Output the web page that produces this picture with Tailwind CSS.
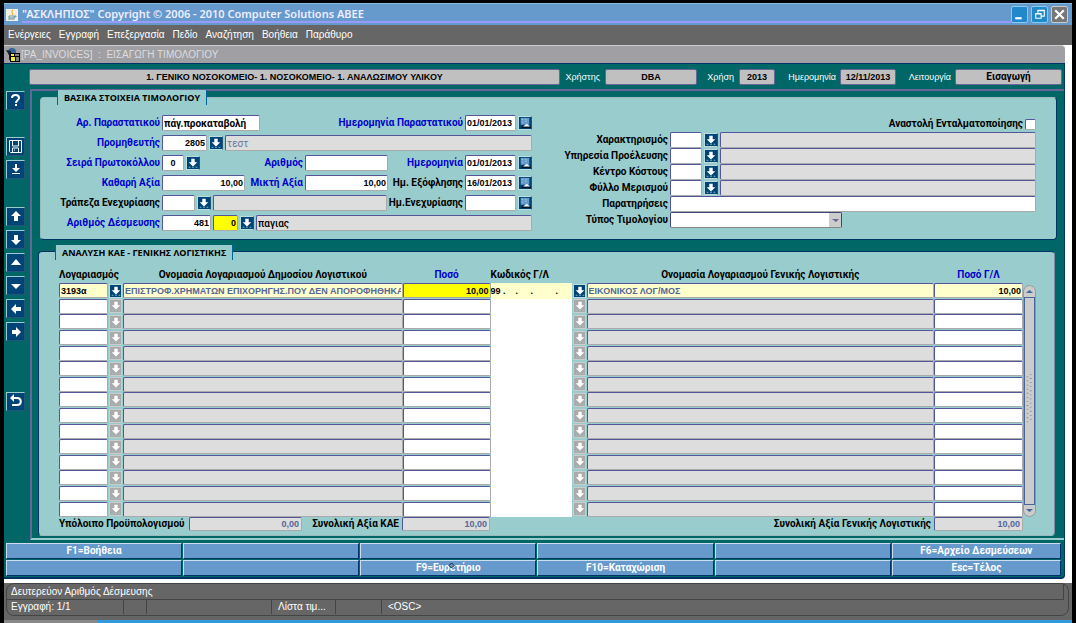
<!DOCTYPE html>
<html lang="el">

<head>
  <title>ΑΣΚΛΗΠΙΟΣ</title>
  <meta charset="UTF-8">
  <meta name="viewport" content="width=device-width, initial-scale=1.0">
  <script src="https://cdn.jsdelivr.net/npm/@tailwindcss/browser@4"></script>
</head>

<body class="bg-black pt-[3px] pl-1 pr-1 text-[10px] leading-3 font-['Liberation_Sans',sans-serif]">
  <!-- icons -->
  <svg class="hidden">
    <symbol id="lov" viewBox="0 0 14 14">
      <path d="M5 2h4v4h3l-5 5-5-5h3z" fill="#fff" />
      <path d="M2 12h2M6 12h2M10 12h2" stroke="#9cc" />
    </symbol>
    <symbol id="cal" viewBox="0 0 14 14">
      <path d="M2 1h10v8H2z" fill="#69c" />
      <path d="M3 3h2M7 3h2M3 6h2M7 5h2" stroke="#9cc" />
      <path d="M3 12h11" stroke="#012" stroke-width="2" />
      <path d="M5 11l4-3 4 3z" fill="#fff" />
    </symbol>
  </svg>

  <header class="flex items-center h-[22px] bg-[#69c] border-t border-[#8bd] pl-[2px] pr-1 text-[#eef]">
    <svg class="w-3 h-3 mr-1" viewBox="0 0 12 12">
      <rect width="12" height="12" fill="#f4f0e0" />
      <path d="M7 1c-3 2 1 3-1 5" stroke="#e90" fill="none" />
      <path d="M3 7h5v2H3zM2 10h7M8 7h2v1H8" stroke="#69a" fill="none" />
    </svg>
    <h1 class="flex-1 border-b-2 border-[#99f] h-[17px] leading-4 text-[11px] font-semibold font-['Noto_Sans',sans-serif]">"ΑΣΚΛΗΠΙΟΣ" Copyright © 2006 - 2010 Computer Solutions ABEE</h1>
    <div class="flex gap-[3px]">
      <button class="size-[17px] rounded-xs border border-[#8ce] bg-[#28c]" aria-label="Minimize">
        <svg viewBox="0 0 14 14"><path d="M3 10.500h6" stroke="#fff" stroke-width="2" /></svg>
      </button>
      <button class="size-[17px] rounded-xs border border-[#8ce] bg-[#28c]" aria-label="Restore">
        <svg viewBox="0 0 14 14"><path d="M5.500 6V3.500h6v5H9M3.500 6.500h5v4h-5zM5 3h7M3 6h6" stroke="#fff" fill="none" /></svg>
      </button>
      <button class="size-[17px] rounded-xs border border-[#ccc] bg-[#777]" aria-label="Close">
        <svg viewBox="0 0 14 14"><path d="M3 3l8 8M11 3l-8 8" stroke="#fff" stroke-width="2" /></svg>
      </button>
    </div>
  </header>

  <nav class="flex items-center gap-2 h-5 bg-[#666] px-1 text-white">
    <a href="#">Ενέργειες</a>
    <a href="#">Εγγραφή</a>
    <a href="#">Επεξεργασία</a>
    <a href="#">Πεδίο</a>
    <a href="#">Αναζήτηση</a>
    <a href="#">Βοήθεια</a>
    <a href="#">Παράθυρο</a>
  </nav>

  <main class="bg-white pr-[7px] pb-1">
    <div class="flex items-center h-[18px] rounded-tr-sm bg-[#a09fa4] border-t border-[#ccc] pl-[2px] text-[#ddd]">
      <svg class="w-[14px] h-[14px] mr-px" viewBox="0 0 14 14">
        <circle cx="6" cy="4" r="4" fill="#369" />
        <path d="M0 2l3 5v5h2V3z" fill="#123" />
        <path d="M4 5h10v9H4z" fill="#000" />
        <path d="M5 6h3v2H5zM5 9h4v4H5z" fill="#ee3" />
        <path d="M9 7h4M10 10h3M10 12h3" stroke="#fff" />
      </svg>
      <h2 class="whitespace-pre">[PA_INVOICES]  :  ΕΙΣΑΓΩΓΗ ΤΙΜΟΛΟΓΙΟΥ</h2>
    </div>

    <div class="bg-[#066] border-t border-r border-b-2 border-[#036] rounded-br-sm">
      <!-- session info -->
      <div class="flex items-center h-[25px] pl-[25px] pr-[2px] text-white text-[9px] [&>output]:h-4 [&>output]:rounded-xs [&>output]:bg-[#c0c0c0] [&>output]:border [&>output]:border-[#669] [&>output]:text-black [&>output]:leading-[14px] [&>output]:text-center [&>output]:font-bold">
        <output class="flex-1">1. ΓΕΝΙΚΟ ΝΟΣΟΚΟΜΕΙΟ- 1. ΝΟΣΟΚΟΜΕΙΟ- 1. ΑΝΑΛΩΣΙΜΟΥ ΥΛΙΚΟΥ</output>
        <span class="w-[45px] text-right pr-[5px]">Χρήστης</span>
        <output class="w-[92px]">DBA</output>
        <span class="w-[42px] text-right pr-[5px]">Χρήση</span>
        <output class="w-9">2013</output>
        <span class="w-[65px] text-right pr-1">Ημερομηνία</span>
        <output class="w-14">12/11/2013</output>
        <span class="w-[59px] text-right pr-1">Λειτουργία</span>
        <output class="w-[107px] text-[10px] font-['Roboto',sans-serif]">Εισαγωγή</output>
      </div>

      <div class="flex">
        <aside class="flex flex-col gap-1 w-[26px] pt-[2px] pl-[2px] [&>button]:w-[19px] [&>button]:h-[19px] [&>button]:bg-[#047] [&>button]:border [&>button]:border-[#9cc] [&>button]:border-r-[#257] [&>button]:border-b-[#257]">
          <button aria-label="Βοήθεια"><svg viewBox="0 0 17 17"><path d="M5 6c0-4 7-4 7 0 0 2-3 2-3 5M9 12v2" stroke="#fff" stroke-width="2" fill="none" /></svg></button>
          <button class="mt-[23px]" aria-label="Αποθήκευση"><svg viewBox="0 0 17 17"><path d="M2.500 2.500h12v12h-11l-1-1zM5.500 3v5h6V3M5.500 14v-4h6v4M7 12h1" stroke="#fff" fill="none" /></svg></button>
          <button aria-label="Εισαγωγή"><svg viewBox="0 0 17 17"><path d="M8 3h2v4h3l-4 4-4-4h3zM5 12h8v1H5z" fill="#fff" /></svg></button>
          <button class="mt-[24px]" aria-label="Πρώτη"><svg viewBox="0 0 17 17"><path d="M9 3l5 5h-3v5H7V8H4z" fill="#fff" /></svg></button>
          <button aria-label="Τελευταία"><svg viewBox="0 0 17 17"><path d="M9 14l5-5h-3V4H7v5H4z" fill="#fff" /></svg></button>
          <button aria-label="Πάνω"><svg viewBox="0 0 17 17"><path d="M9 5l5 6H4z" fill="#fff" /></svg></button>
          <button aria-label="Κάτω"><svg viewBox="0 0 17 17"><path d="M9 12l5-5H4z" fill="#fff" /></svg></button>
          <button aria-label="Προηγούμενο"><svg viewBox="0 0 17 17"><path d="M4 9l5-5v3h5v4H9v3z" fill="#fff" /></svg></button>
          <button aria-label="Επόμενο"><svg viewBox="0 0 17 17"><path d="M14 9L9 4v3H5v4h4v3z" fill="#fff" /></svg></button>
          <button class="mt-[47px]" aria-label="Έξοδος"><svg viewBox="0 0 17 17"><path d="M4 5h6c5 0 5 7 0 7H5" stroke="#fff" stroke-width="2" fill="none" /><path d="M3 5l4-4v8z" fill="#fff" /></svg></button>
        </aside>

        <div class="flex-1 border-2 border-r-0 border-[#669] border-b-[#9cc] pr-[7px] pb-[2px] font-bold font-['Roboto',sans-serif]">
          <!-- basic data -->
          <section class="mt-[6px] ml-2 h-[143px] rounded-sm bg-[#9cc] border border-[#9bb] border-r-[#036] border-b-[#036] pl-4 pr-5">
            <h3 class="w-fit -mt-2 h-[15px] px-[6px] leading-4 bg-[#9cc] border-x border-[#069] text-[9px] font-['Open_Sans',sans-serif]">ΒΑΣΙΚΑ ΣΤΟΙΧΕΙΑ ΤΙΜΟΛΟΓΙΟΥ</h3>
            <form class="flex items-start [&_label]:text-right [&_label]:whitespace-nowrap [&_input]:h-4 [&_input]:px-px [&_input]:rounded-xs [&_input]:border [&_input]:border-[#559] [&_input]:border-r-[#aaa] [&_input]:border-b-[#aaa] [&_button]:w-[14px] [&_button]:h-[14px] [&_button]:bg-[#047] [&_button]:border [&_button]:border-[#bdd] [&_button]:border-r-[#257] [&_button>svg]:size-3">
              <div class="w-[475px] pt-2 text-[#00c] [&>div]:flex [&>div]:items-center [&>div]:h-5 [&>div]:gap-[2px] [&_input]:text-black">
                <div>
                  <label for="f1" class="w-[103px]">Αρ. Παραστατικού</label>
                  <input id="f1" class="w-[98px] bg-white" value="πάγ.προκαταβολή">
                  <label for="f2" class="ml-auto">Ημερομηνία Παραστατικού</label>
                  <input id="f2" class="w-[51px] bg-white text-[9px] font-['Liberation_Sans',sans-serif]" value="01/01/2013">
                  <button type="button" aria-label="Ημερολόγιο"><svg><use href="#cal" /></svg></button>
                </div>
                <div>
                  <label for="f3" class="w-[103px]">Προμηθευτής</label>
                  <input id="f3" class="w-[45px] bg-white text-right text-[9px] font-['Liberation_Sans',sans-serif]" value="2805">
                  <button type="button" aria-label="Λίστα"><svg><use href="#lov" /></svg></button>
                  <input class="flex-1 bg-[#ddd] font-normal text-[#679]!" value="τεστ" readonly aria-label="Όνομα προμηθευτή">
                </div>
                <div>
                  <label for="f4" class="w-[103px]">Σειρά Πρωτοκόλλου</label>
                  <input id="f4" class="w-[22px] bg-white text-center text-[9px] font-['Liberation_Sans',sans-serif]" value="0">
                  <button type="button" aria-label="Λίστα"><svg><use href="#lov" /></svg></button>
                  <label for="f5" class="w-[101px]">Αριθμός</label>
                  <input id="f5" class="w-[83px] bg-white">
                  <label for="f6" class="ml-auto">Ημερομηνία</label>
                  <input id="f6" class="w-[51px] bg-white text-[9px] font-['Liberation_Sans',sans-serif]" value="01/01/2013">
                  <button type="button" aria-label="Ημερολόγιο"><svg><use href="#cal" /></svg></button>
                </div>
                <div>
                  <label for="f7" class="w-[103px]">Καθαρή Αξία</label>
                  <input id="f7" class="w-[83px] bg-white text-right text-[9px] font-['Liberation_Sans',sans-serif]" value="10,00">
                  <label for="f8" class="w-14">Μικτή Αξία</label>
                  <input id="f8" class="w-[83px] bg-white text-right text-[9px] font-['Liberation_Sans',sans-serif]" value="10,00">
                  <label for="f9" class="ml-auto text-black">Ημ. Εξόφλησης</label>
                  <input id="f9" class="w-[51px] bg-white text-[9px] font-['Liberation_Sans',sans-serif]" value="16/01/2013">
                  <button type="button" aria-label="Ημερολόγιο"><svg><use href="#cal" /></svg></button>
                </div>
                <div>
                  <label for="f10" class="w-[103px] text-black">Τράπεζα Ενεχυρίασης</label>
                  <input id="f10" class="w-[33px] bg-white">
                  <button type="button" aria-label="Λίστα"><svg><use href="#lov" /></svg></button>
                  <input class="flex-1 min-w-0 bg-[#ddd]" readonly aria-label="Τράπεζα">
                  <label for="f11" class="text-black">Ημ.Ενεχυρίασης</label>
                  <input id="f11" class="w-[51px] bg-white">
                  <button type="button" aria-label="Ημερολόγιο"><svg><use href="#cal" /></svg></button>
                </div>
                <div>
                  <label for="f12" class="w-[103px]">Αριθμός Δέσμευσης</label>
                  <input id="f12" class="w-[49px] bg-white text-right text-[9px] font-['Liberation_Sans',sans-serif]" value="481">
                  <input class="w-[25px] bg-[#ff0] text-right text-[9px] font-['Liberation_Sans',sans-serif]" value="0" aria-label="Δευτερεύον Αριθμός Δέσμευσης">
                  <button type="button" aria-label="Λίστα"><svg><use href="#lov" /></svg></button>
                  <input class="flex-1 bg-[#ddd] font-medium" value="παγιας" readonly aria-label="Περιγραφή δέσμευσης">
                </div>
              </div>

              <div class="flex-1 pt-[11px] pl-5 text-black [&>div]:flex [&>div]:items-center [&>div]:h-4 [&>div]:gap-[2px]">
                <div class="justify-end">
                  <label for="g0">Αναστολή Ενταλματοποίησης</label>
                  <input id="g0" type="checkbox" class="appearance-none w-[11px] h-[11px]! p-0! bg-white">
                </div>
                <div>
                  <label for="g1" class="w-[116px]">Χαρακτηρισμός</label>
                  <input id="g1" class="w-8 bg-white">
                  <button type="button" aria-label="Λίστα"><svg><use href="#lov" /></svg></button>
                  <input class="flex-1 bg-[#ddd]" readonly aria-label="Χαρακτηρισμός">
                </div>
                <div>
                  <label for="g2" class="w-[116px]">Υπηρεσία Προέλευσης</label>
                  <input id="g2" class="w-8 bg-white">
                  <button type="button" aria-label="Λίστα"><svg><use href="#lov" /></svg></button>
                  <input class="flex-1 bg-[#ddd]" readonly aria-label="Υπηρεσία">
                </div>
                <div>
                  <label for="g3" class="w-[116px]">Κέντρο Κόστους</label>
                  <input id="g3" class="w-8 bg-white">
                  <button type="button" aria-label="Λίστα"><svg><use href="#lov" /></svg></button>
                  <input class="flex-1 bg-[#ddd]" readonly aria-label="Κέντρο">
                </div>
                <div>
                  <label for="g4" class="w-[116px]">Φύλλο Μερισμού</label>
                  <input id="g4" class="w-8 bg-white">
                  <button type="button" aria-label="Λίστα"><svg><use href="#lov" /></svg></button>
                  <input class="flex-1 bg-[#ddd]" readonly aria-label="Φύλλο">
                </div>
                <div>
                  <label for="g5" class="w-[116px]">Παρατηρήσεις</label>
                  <input id="g5" class="flex-1 bg-white">
                </div>
                <div>
                  <label for="g6" class="w-[116px]">Τύπος Τιμολογίου</label>
                  <div class="relative">
                    <select id="g6" class="block appearance-none w-[172px] h-4 rounded-xs bg-white border border-[#447] border-b-[#888]"><option></option></select>
                    <svg class="absolute right-px top-px w-3 h-[14px] bg-[#ccc] pointer-events-none" viewBox="0 0 12 14"><path d="M3 6h7l-3 3z" fill="#669" /></svg>
                  </div>
                </div>
              </div>
            </form>
          </section>

          <!-- account lines -->
          <section class="mt-[11px] ml-[6px] mr-[2px] rounded-sm bg-[#9cc] border border-[#036] border-b-[#9bb] border-r-[#88a] pl-4 pr-[18px] pb-1">
            <h3 class="w-fit -mt-[7px] h-[15px] px-[6px] leading-4 bg-[#9cc] border-x border-[#069] text-[9px] font-['Open_Sans',sans-serif]">ΑΝΑΛΥΣΗ ΚΑΕ - ΓΕΝΙΚΗΣ ΛΟΓΙΣΤΙΚΗΣ</h3>
            <div class="flex items-end pl-1 pt-[7px]">
              <table class="flex-1 w-full table-fixed border-collapse [&_input]:block [&_input]:w-full [&_input]:h-[15px] [&_input]:px-px [&_input]:rounded-xs [&_input]:border [&_input]:border-[#559] [&_input]:border-r-[#aaa] [&_input]:border-b-[#aaa] [&_button]:block [&_button]:w-[13px] [&_button]:h-[14px] [&_button]:mx-auto [&_button]:border">
                <colgroup>
                  <col class="w-[49px]">
                  <col class="w-[15px]">
                  <col class="w-[29%]">
                  <col class="w-[88px]">
                  <col class="w-[81px]">
                  <col class="w-[15px]">
                  <col>
                  <col class="w-[89px]">
                </colgroup>
                <thead>
                  <tr class="h-4 whitespace-nowrap">
                    <th colspan="2" class="text-left">Λογαριασμός</th>
                    <th>Ονομασία Λογαριασμού Δημοσίου Λογιστικού</th>
                    <th class="text-[#00c]">Ποσό</th>
                    <th class="text-left">Κωδικός Γ/Λ</th>
                    <th></th>
                    <th>Ονομασία Λογαριασμού Γενικής Λογιστικής</th>
                    <th class="text-[#00c]">Ποσό Γ/Λ</th>
                  </tr>
                </thead>
                <tbody id="lines" class="h-[234px]">
                  <tr>
                    <td><input class="bg-[#ffc] text-[9px] font-['Liberation_Sans',sans-serif]" value="3193α" aria-label="Λογαριασμός"></td>
                    <td><button class="bg-[#047] border-[#bdd]" aria-label="Λίστα"><svg class="size-3"><use href="#lov" /></svg></button></td>
                    <td><input class="bg-[#ffc] text-[#569] text-[9px] font-['Liberation_Sans',sans-serif]" value="ΕΠΙΣΤΡΟΦ.ΧΡΗΜΑΤΩΝ ΕΠΙΧΟΡΗΓΗΣ.ΠΟΥ ΔΕΝ ΑΠΟΡΟΦΗΘΗΚΑΝ" aria-label="Ονομασία"></td>
                    <td><input class="bg-[#ff0] text-right text-[9px] font-['Liberation_Sans',sans-serif]" value="10,00" aria-label="Ποσό"></td>
                    <td class="bg-[#ffc] whitespace-pre text-[9px] font-['Liberation_Sans',sans-serif]">99 .    .     .         .</td>
                    <td><button class="bg-[#047] border-[#bdd]" aria-label="Λίστα"><svg class="size-3"><use href="#lov" /></svg></button></td>
                    <td><input class="bg-[#ffc] text-[#569] text-[9px] font-['Liberation_Sans',sans-serif]" value="ΕΙΚΟΝΙΚΟΣ ΛΟΓ/ΜΟΣ" aria-label="Ονομασία Γ/Λ"></td>
                    <td><input class="bg-[#ffc] text-right text-[9px] font-['Liberation_Sans',sans-serif]" value="10,00" aria-label="Ποσό Γ/Λ"></td>
                  </tr>
                </tbody>
              </table>
              <div class="flex flex-col w-[13px] h-[232px] rounded-full bg-[#ccc] border border-[#999]">
                <svg class="h-[11px]" viewBox="0 0 11 11"><path d="M2 7h7L5.500 4z" fill="#469" /></svg>
                <svg class="flex-1 border border-[#469]" viewBox="0 0 11 208">
                  <path d="M3 74v56" stroke="#888" stroke-dasharray="1 4" stroke-width="2" />
                  <path d="M7 71v56" stroke="#888" stroke-dasharray="1 4" stroke-width="2" />
                </svg>
                <svg class="h-[11px]" viewBox="0 0 11 11"><path d="M2 4h7L5.500 7z" fill="#469" /></svg>
              </div>
            </div>
            <div class="flex items-center gap-[3px] pl-1 pr-[13px] [&_input]:h-[14px] [&_input]:px-[2px] [&_input]:rounded-xs [&_input]:border [&_input]:border-[#559] [&_input]:border-r-[#aaa] [&_input]:border-b-[#aaa] [&_input]:bg-[#ddd] [&_input]:text-right [&_input]:text-[#569] [&_input]:text-[9px] [&_input]:font-['Liberation_Sans',sans-serif]">
              <label for="t1" class="w-[127px]">Υπόλοιπο Προϋπολογισμού</label>
              <input id="t1" class="w-[113px]" value="0,00" readonly>
              <label for="t2" class="w-[94px] text-right">Συνολική Αξία ΚΑΕ</label>
              <input id="t2" class="w-[88px]" value="10,00" readonly>
              <label for="t3" class="ml-auto">Συνολική Αξία Γενικής Λογιστικής</label>
              <input id="t3" class="w-[89px]" value="10,00" readonly>
            </div>
          </section>
        </div>
      </div>

      <!-- function keys -->
      <div class="grid grid-cols-[177fr_177fr_177fr_177fr_177fr_170fr] gap-px pt-[3px] pl-[2px] pr-[3px] pb-px text-white font-bold font-['Roboto',sans-serif] [&>button]:h-4 [&>button]:bg-[#69c] [&>button]:border [&>button]:border-[#036] [&>button]:border-t-[#cde] [&>button]:border-l-[#cde]">
        <button>F1=Βοήθεια</button>
        <button></button>
        <button></button>
        <button></button>
        <button></button>
        <button>F6=Αρχείο Δεσμεύσεων</button>
        <button></button>
        <button></button>
        <button class="relative">F9=Ευρετήριο
          <svg class="absolute left-1/2 top-px size-[7px]" viewBox="0 0 7 7"><path d="M3.500 1L6 3.500 3.500 6 1 3.500z" fill="#69c" stroke="#123" /></svg>
        </button>
        <button>F10=Καταχώριση</button>
        <button></button>
        <button>Esc=Τέλος</button>
      </div>
    </div>
  </main>

  <footer class="bg-[#666] pl-[2px] pr-[3px] pb-1 text-white">
    <div class="rounded-lg border border-[#444]">
      <div class="flex h-4 mr-1 border-b border-[#444] pl-1">
        <p class="flex-1 leading-4 border-r border-[#444]">Δευτερεύον Αριθμός Δέσμευσης</p>
      </div>
      <div class="flex h-[14px] leading-[14px] pl-1 mb-px [&>span]:border-r [&>span]:border-[#444]">
        <span class="w-[113px]">Εγγραφή: 1/1</span>
        <span class="w-[23px]"></span>
        <span class="w-[125px]"></span>
        <span class="w-16 pl-[6px]">Λίστα τιμ...</span>
        <span class="w-[46px]"></span>
        <p class="pl-[6px]">&lt;OSC&gt;</p>
      </div>
    </div>
  </footer>
  <div class="h-[3px] bg-[#39d] border-l-[93px] border-[#888]"></div>
</body>

<script>
  const lines = document.getElementById("lines");

  // empty lines under the current record
  for (let i = 2; i <= 15; i++) {
    const button = "<button class='bg-[#aaa] border-[#ccc]' aria-label='Λίστα " + i + "'><svg class='size-3'><use href='#lov'/></svg></button>";
    lines.innerHTML += "<tr>" +
      "<td><input class='bg-white' aria-label='Λογαριασμός " + i + "'></td>" +
      "<td>" + button + "</td>" +
      "<td><input class='bg-[#ddd]' readonly aria-label='Ονομασία " + i + "'></td>" +
      "<td><input class='bg-white' aria-label='Ποσό " + i + "'></td>" +
      "<td class='bg-white'></td>" +
      "<td>" + button + "</td>" +
      "<td><input class='bg-[#ddd]' readonly aria-label='Ονομασία Γ/Λ " + i + "'></td>" +
      "<td><input class='bg-white' aria-label='Ποσό Γ/Λ " + i + "'></td>" +
      "</tr>";
  }
</script>

</html>
